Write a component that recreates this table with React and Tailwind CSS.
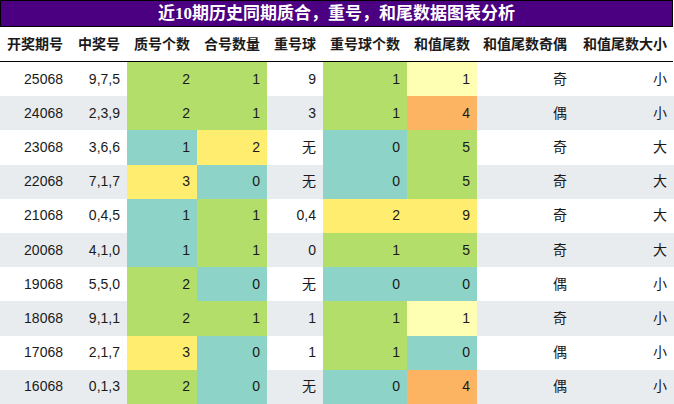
import React from 'react';

// Set3-style cell colours
const C = {
  g: 'bg-[#b3de69]',
  t: 'bg-[#8dd3c7]',
  y: 'bg-[#ffed6f]',
  ly: 'bg-[#ffffb3]',
  o: 'bg-[#fdb462]',
};

const HEADERS = ['开奖期号', '中奖号', '质号个数', '合号数量', '重号球', '重号球个数', '和值尾数', '和值尾数奇偶', '和值尾数大小'];

// [期号, 中奖号, [质号, 色], [合号, 色], 重号球, [个数, 色], [尾数, 色], 奇偶, 大小]
const ROWS = [
  ['25068', '9,7,5', ['2', 'g'], ['1', 'g'], '9', ['1', 'g'], ['1', 'ly'], '奇', '小'],
  ['24068', '2,3,9', ['2', 'g'], ['1', 'g'], '3', ['1', 'g'], ['4', 'o'], '偶', '小'],
  ['23068', '3,6,6', ['1', 't'], ['2', 'y'], '无', ['0', 't'], ['5', 'g'], '奇', '大'],
  ['22068', '7,1,7', ['3', 'y'], ['0', 't'], '无', ['0', 't'], ['5', 'g'], '奇', '大'],
  ['21068', '0,4,5', ['1', 't'], ['1', 'g'], '0,4', ['2', 'y'], ['9', 'y'], '奇', '大'],
  ['20068', '4,1,0', ['1', 't'], ['1', 'g'], '0', ['1', 'g'], ['5', 'g'], '奇', '大'],
  ['19068', '5,5,0', ['2', 'g'], ['0', 't'], '无', ['0', 't'], ['0', 't'], '偶', '小'],
  ['18068', '9,1,1', ['2', 'g'], ['1', 'g'], '1', ['1', 'g'], ['1', 'ly'], '奇', '小'],
  ['17068', '2,1,7', ['3', 'y'], ['0', 't'], '1', ['1', 'g'], ['0', 't'], '偶', '小'],
  ['16068', '0,1,3', ['2', 'g'], ['0', 't'], '无', ['0', 't'], ['4', 'o'], '偶', '小'],
];

const COLS = 'grid grid-cols-[70px_57px_70px_70px_56px_84px_70px_97px_100px]';

function Cell({ children, color }) {
  return (
    <div className={`flex items-center justify-end pr-[7px] ${color || ''}`}>
      {children}
    </div>
  );
}

export default function App() {
  return (
    <div className="w-[674px] h-[404px] overflow-hidden bg-white text-[#1a1a1a]"
         style={{ fontFamily: '"Liberation Sans", "Noto Sans CJK SC", sans-serif' }}>
      {/* Title */}
      <div className="h-[27px] w-[673px] border border-black bg-[#4b0082] flex items-center justify-center text-white font-bold text-[17px] leading-none"
           style={{ fontFamily: '"Liberation Serif", "Noto Sans CJK SC", serif' }}>
        近10期历史同期质合，重号，和尾数据图表分析
      </div>

      {/* Header */}
      <div className={`${COLS} h-[35px] w-[673px] border-b border-black font-bold text-[14px]`}>
        {HEADERS.map(h => (
          <div key={h} className="flex items-center justify-end pr-[7px] whitespace-nowrap">{h}</div>
        ))}
      </div>

      {/* Body */}
      {ROWS.map((r, i) => (
        <div key={r[0]} className={`${COLS} h-[34.2px] text-[14px] ${i % 2 ? 'bg-[#e9ecef]' : 'bg-white'}`}>
          <Cell>{r[0]}</Cell>
          <Cell>{r[1]}</Cell>
          <Cell color={C[r[2][1]]}>{r[2][0]}</Cell>
          <Cell color={C[r[3][1]]}>{r[3][0]}</Cell>
          <Cell>{r[4]}</Cell>
          <Cell color={C[r[5][1]]}>{r[5][0]}</Cell>
          <Cell color={C[r[6][1]]}>{r[6][0]}</Cell>
          <Cell>{r[7]}</Cell>
          <Cell>{r[8]}</Cell>
        </div>
      ))}
    </div>
  );
}
